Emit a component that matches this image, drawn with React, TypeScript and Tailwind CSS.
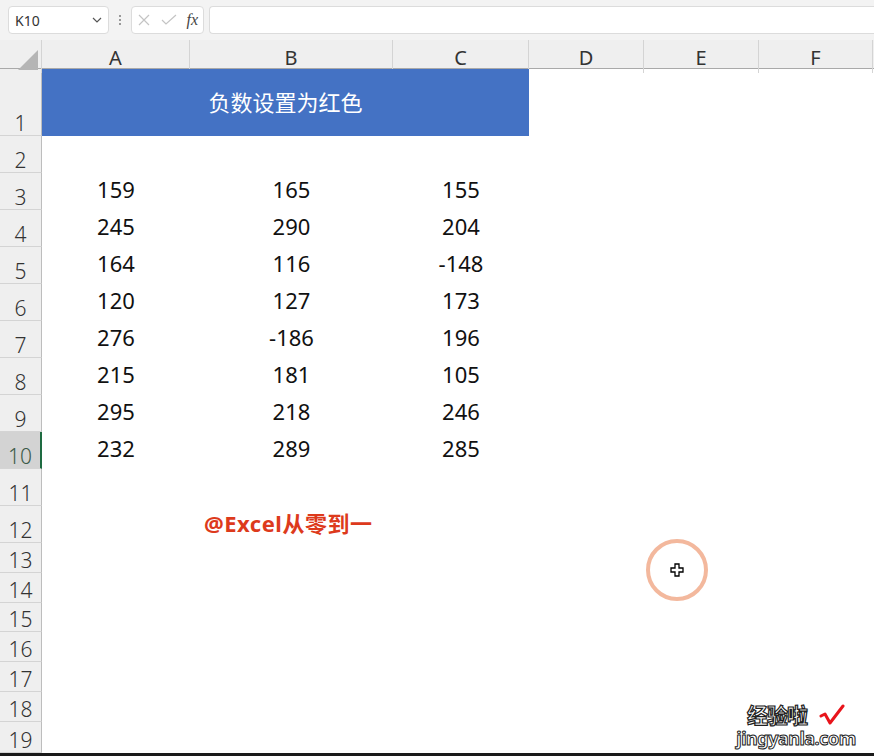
import React from 'react';

const cols = ['A', 'B', 'C', 'D', 'E', 'F'];

const rowsData: { n: number; h: string; vals?: string[] }[] = [
  { n: 2, h: 'h-[37px]' },
  { n: 3, h: 'h-[37px]', vals: ['159', '165', '155'] },
  { n: 4, h: 'h-[37px]', vals: ['245', '290', '204'] },
  { n: 5, h: 'h-[37px]', vals: ['164', '116', '-148'] },
  { n: 6, h: 'h-[37px]', vals: ['120', '127', '173'] },
  { n: 7, h: 'h-[37px]', vals: ['276', '-186', '196'] },
  { n: 8, h: 'h-[37px]', vals: ['215', '181', '105'] },
  { n: 9, h: 'h-[37px]', vals: ['295', '218', '246'] },
  { n: 10, h: 'h-[37px]', vals: ['232', '289', '285'] },
  { n: 11, h: 'h-[37px]' },
  { n: 12, h: 'h-[37px]' },
  { n: 13, h: 'h-[30px]' },
  { n: 14, h: 'h-[30px]' },
  { n: 15, h: 'h-[29px]' },
  { n: 16, h: 'h-[30px]' },
  { n: 17, h: 'h-[30px]' },
  { n: 18, h: 'h-[30px]' },
  { n: 19, h: 'h-[31px]' },
];

const gridCols = 'grid grid-cols-[42px_148px_203px_136px_115px_115px_114px]';

function RowHead({ n, active }: { n: number; active?: boolean }) {
  return (
    <div
      className={
        active
          ? 'flex items-end justify-center border-b border-[#d4d4d4] border-r-2 border-r-[#1e6b41] bg-[#d3d3d3] text-[21px] font-light leading-none text-[#3b5a48]'
          : 'flex items-end justify-center border-b border-[#d4d4d4] border-r border-r-[#bdbdbd] bg-[#efefef] text-[21px] font-light leading-none text-[#333]'
      }
    >
      <span className="pb-[1px]">{n}</span>
    </div>
  );
}

export default function App() {
  return (
    <div className="relative h-[756px] w-[874px] overflow-hidden bg-white font-['Noto_Sans','Noto_Sans_CJK_SC',sans-serif]">
      {/* formula bar */}
      <div className="flex h-[40px] items-center bg-[#f3f3f3] pl-[8px]">
        <div className="flex h-[28px] w-[101px] items-center justify-between rounded-[4px] border border-[#dcdcdc] bg-white pl-[6px] pr-[6px] text-[14px] text-[#333]">
          <span>K10</span>
          <svg width="10" height="6" viewBox="0 0 10 6" fill="none" stroke="#555" strokeWidth="1.2">
            <path d="M1 1l4 4 4-4" />
          </svg>
        </div>
        <div className="flex w-[22px] flex-col items-center gap-[2px]">
          <span className="h-[2px] w-[2px] bg-[#999]" />
          <span className="h-[2px] w-[2px] bg-[#999]" />
          <span className="h-[2px] w-[2px] bg-[#999]" />
        </div>
        <div className="flex h-[28px] w-[73px] items-center justify-between rounded-[4px] border border-[#dcdcdc] bg-white px-[5px]">
          <svg width="14" height="14" viewBox="0 0 14 14" fill="none" stroke="#c4c4c4" strokeWidth="1.2">
            <path d="M2 2l10 10M12 2L2 12" />
          </svg>
          <svg width="16" height="12" viewBox="0 0 16 12" fill="none" stroke="#c4c4c4" strokeWidth="1.2">
            <path d="M1 6l4 4 10-9" />
          </svg>
          <span className="font-['Liberation_Serif',serif] text-[16px] italic text-[#444]">fx</span>
        </div>
        <div className="ml-[5px] h-[28px] flex-1 rounded-l-[4px] border border-r-0 border-[#dcdcdc] bg-white" />
      </div>

      {/* column header */}
      <div className={`${gridCols} h-[29px] border-b border-[#a9a9a9] bg-[#efefef]`}>
        <div className="relative border-r border-[#d4d4d4]">
          <div className="absolute bottom-[3px] right-[3px] h-0 w-0 border-b-[20px] border-l-[20px] border-b-[#b5b5b5] border-l-transparent" />
        </div>
        {cols.map((c) => (
          <div key={c} className="flex items-center justify-center border-r border-[#d4d4d4] pt-[3px] text-[20px] text-[#333]">
            {c}
          </div>
        ))}
      </div>

      {/* row 1 */}
      <div className={`${gridCols} h-[67px]`}>
        <RowHead n={1} />
        <div className="col-span-3 flex items-center justify-center bg-[#4472c4] text-[22px] text-white">
          负数设置为红色
        </div>
        <div />
        <div />
        <div />
      </div>

      {rowsData.map((r) => (
        <div key={r.n} className={`${gridCols} ${r.h}`}>
          <RowHead n={r.n} active={r.n === 10} />
          {r.vals ? (
            r.vals.map((v, i) => (
              <div key={i} className="flex items-center justify-center pb-[4px] text-[22px] text-[#111]">
                {v}
              </div>
            ))
          ) : r.n === 12 ? (
            <>
              <div />
              <div className="flex items-center pb-[2px] pl-[14px] text-[22px] font-bold tracking-[0.5px] text-[#dd3a1c]">
                @Excel从零到一
              </div>
              <div />
            </>
          ) : (
            <>
              <div />
              <div />
              <div />
            </>
          )}
          <div />
          <div />
          <div />
        </div>
      ))}
      <div className="h-[3px] bg-[#1a1a1a]" />

      {/* click indicator */}
      <div className="absolute left-[646px] top-[539px] flex h-[62px] w-[62px] items-center justify-center rounded-full border-[4px] border-[#f3b89d]">
        <svg width="14" height="14" viewBox="0 0 14 14">
          <path d="M5 1h4v4h4v4H9v4H5V9H1V5h4z" fill="white" stroke="black" strokeWidth="1.3" />
        </svg>
      </div>

      {/* watermark */}
      <div className="absolute left-[733px] top-[702px] flex w-[126px] flex-col items-center">
        <div className="flex h-[26px] items-center gap-[12px] leading-none">
          <span className="text-[21px] font-bold tracking-[-1px] text-white [-webkit-text-stroke:1.2px_#222]">经验啦</span>
          <svg width="26" height="22" viewBox="0 0 26 22" fill="none" stroke="#e8141b" strokeWidth="3" strokeLinecap="round" strokeLinejoin="round">
            <path d="M2 12l4-2 5 9L24 2" />
          </svg>
        </div>
        <span className="h-[20px] text-[18px] font-bold leading-[20px] tracking-[-0.5px] text-white [-webkit-text-stroke:1px_#222]">jingyanla.com</span>
      </div>
    </div>
  );
}
